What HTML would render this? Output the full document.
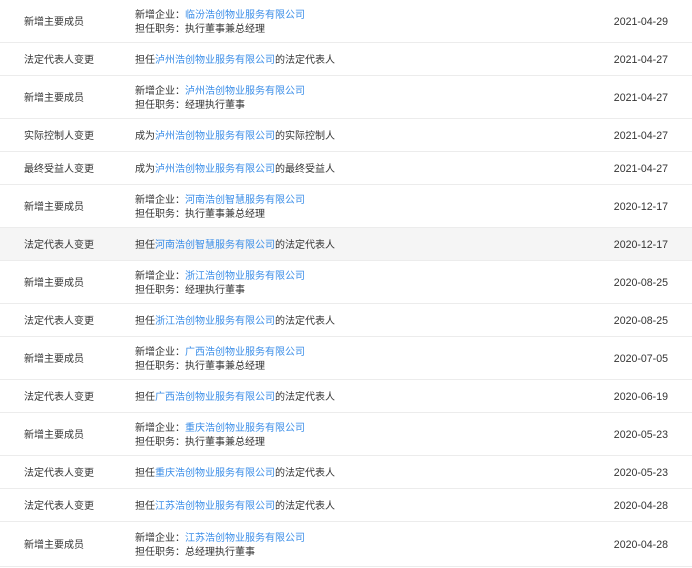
<!DOCTYPE html>
<html><head><meta charset="utf-8"><style>
html,body{margin:0;padding:0;background:#fff;width:692px;height:568px;overflow:hidden}
body{font-family:"Liberation Sans","Noto Sans CJK SC",sans-serif;font-size:10px;color:#333;position:relative}
.r{position:absolute;left:0;width:692px;border-bottom:1px solid #ececec;box-sizing:border-box}
.r.h{background:#f5f5f5}
.a,.b,.d{position:absolute;top:50%;transform:translateY(-50%);white-space:nowrap;line-height:14px;display:block}
.a{left:24px;margin-top:2px}
.b{left:135px;margin-top:2px}
.d{right:24px;font-size:10.6px;margin-top:1px}
a{color:#3b8ee8;text-decoration:none}
</style></head><body>
<div class="r" style="top:-1px;height:44px"><span class="a">新增主要成员</span><span class="b">新增企业：<a>临汾浩创物业服务有限公司</a><br>担任职务：执行董事兼总经理</span><span class="d">2021-04-29</span></div>
<div class="r" style="top:43px;height:33px"><span class="a">法定代表人变更</span><span class="b">担任<a>泸州浩创物业服务有限公司</a>的法定代表人</span><span class="d">2021-04-27</span></div>
<div class="r" style="top:76px;height:43px"><span class="a">新增主要成员</span><span class="b">新增企业：<a>泸州浩创物业服务有限公司</a><br>担任职务：经理执行董事</span><span class="d">2021-04-27</span></div>
<div class="r" style="top:119px;height:33px"><span class="a">实际控制人变更</span><span class="b">成为<a>泸州浩创物业服务有限公司</a>的实际控制人</span><span class="d">2021-04-27</span></div>
<div class="r" style="top:152px;height:33px"><span class="a">最终受益人变更</span><span class="b">成为<a>泸州浩创物业服务有限公司</a>的最终受益人</span><span class="d">2021-04-27</span></div>
<div class="r" style="top:185px;height:43px"><span class="a">新增主要成员</span><span class="b">新增企业：<a>河南浩创智慧服务有限公司</a><br>担任职务：执行董事兼总经理</span><span class="d">2020-12-17</span></div>
<div class="r h" style="top:228px;height:33px"><span class="a">法定代表人变更</span><span class="b">担任<a>河南浩创智慧服务有限公司</a>的法定代表人</span><span class="d">2020-12-17</span></div>
<div class="r" style="top:261px;height:43px"><span class="a">新增主要成员</span><span class="b">新增企业：<a>浙江浩创物业服务有限公司</a><br>担任职务：经理执行董事</span><span class="d">2020-08-25</span></div>
<div class="r" style="top:304px;height:33px"><span class="a">法定代表人变更</span><span class="b">担任<a>浙江浩创物业服务有限公司</a>的法定代表人</span><span class="d">2020-08-25</span></div>
<div class="r" style="top:337px;height:43px"><span class="a">新增主要成员</span><span class="b">新增企业：<a>广西浩创物业服务有限公司</a><br>担任职务：执行董事兼总经理</span><span class="d">2020-07-05</span></div>
<div class="r" style="top:380px;height:33px"><span class="a">法定代表人变更</span><span class="b">担任<a>广西浩创物业服务有限公司</a>的法定代表人</span><span class="d">2020-06-19</span></div>
<div class="r" style="top:413px;height:43px"><span class="a">新增主要成员</span><span class="b">新增企业：<a>重庆浩创物业服务有限公司</a><br>担任职务：执行董事兼总经理</span><span class="d">2020-05-23</span></div>
<div class="r" style="top:456px;height:33px"><span class="a">法定代表人变更</span><span class="b">担任<a>重庆浩创物业服务有限公司</a>的法定代表人</span><span class="d">2020-05-23</span></div>
<div class="r" style="top:489px;height:33px"><span class="a">法定代表人变更</span><span class="b">担任<a>江苏浩创物业服务有限公司</a>的法定代表人</span><span class="d">2020-04-28</span></div>
<div class="r" style="top:522px;height:45px"><span class="a">新增主要成员</span><span class="b">新增企业：<a>江苏浩创物业服务有限公司</a><br>担任职务：总经理执行董事</span><span class="d">2020-04-28</span></div>
</body></html>
